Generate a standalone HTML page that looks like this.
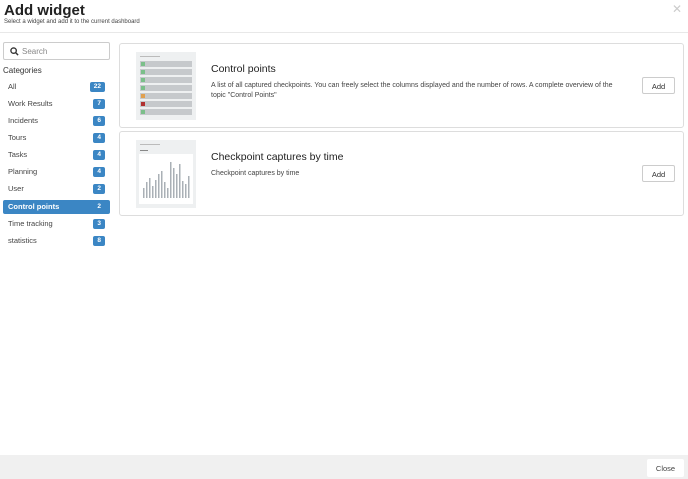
<!DOCTYPE html>
<html><head><style>
*{box-sizing:border-box;margin:0;padding:0}
body{width:688px;height:479px;background:#fff;font-family:"Liberation Sans",sans-serif;color:#333;position:relative;overflow:hidden}
.abs{position:absolute}
h1{position:absolute;left:4px;top:2px;font-size:15px;font-weight:bold;color:#222}
.sub{left:4px;top:19px;font-size:6px;color:#444}
.x{right:6px;top:2px;font-size:12px;color:#ccc}
.hr{left:0;right:0;top:32px;height:1px;background:#e8e8e8}
.search{left:3px;top:42px;width:107px;height:18px;border:1px solid #ccc;border-radius:2px;font-size:8px;color:#888;padding:4px 0 0 18px}
.cat{left:3px;top:66px;font-size:8px;color:#333}
.row{left:3px;width:107px;height:14px;line-height:14px;font-size:7.5px;color:#444;padding:0 0 0 5px;border-radius:2px}
.row b{position:absolute;right:5px;top:2px;height:10px;line-height:10px;background:#3b86c4;color:#fff;font-size:6.5px;border-radius:2px;padding:0 4px;font-weight:bold}
.row.on{background:#3b86c4;color:#fff;font-weight:bold}
.row.on b{background:none}
.card{left:119px;width:565px;height:85px;border:1px solid #ddd;border-radius:3px}
.thumb{position:absolute;left:16px;top:8px;width:60px;height:68px;background:#eef0f1}
.t{position:absolute;left:91px;font-size:10.5px;color:#222}
.d{position:absolute;left:91px;font-size:7px;color:#444;line-height:10px;width:410px}
.btn{position:absolute;right:8px;width:33px;height:17px;border:1px solid #ccc;border-radius:2px;font-size:7.5px;text-align:center;padding-top:4px;color:#333}
.foot{left:0;right:0;top:455px;height:24px;background:#f0f0f0}
.close{right:4px;top:459px;width:37px;height:18px;background:#fff;border-radius:2px;font-size:7.5px;text-align:center;padding-top:5px;color:#444}
</style></head><body>
<h1>Add widget</h1>
<div class="abs sub">Select a widget and add it to the current dashboard</div>
<div class="abs x">✕</div>
<div class="abs hr"></div>
<div class="abs search"><svg class="abs" style="left:6px;top:4px" width="9" height="9" viewBox="0 0 10 10"><circle cx="4" cy="4" r="3" fill="none" stroke="#333" stroke-width="1.5"/><path d="M6.3 6.3L9 9" stroke="#333" stroke-width="1.6"/></svg>Search</div>
<div class="abs cat">Categories</div>
<div class="abs row" style="top:80px">All<b>22</b></div>
<div class="abs row" style="top:97px">Work Results<b>7</b></div>
<div class="abs row" style="top:114px">Incidents<b>6</b></div>
<div class="abs row" style="top:131px">Tours<b>4</b></div>
<div class="abs row" style="top:148px">Tasks<b>4</b></div>
<div class="abs row" style="top:165px">Planning<b>4</b></div>
<div class="abs row" style="top:182px">User<b>2</b></div>
<div class="abs row on" style="top:200px">Control points<b>2</b></div>
<div class="abs row" style="top:217px">Time tracking<b>3</b></div>
<div class="abs row" style="top:234px">statistics<b>8</b></div>

<div class="abs card" style="top:43px">
<div class="thumb">
<div style="position:absolute;left:4px;top:4px;width:20px;height:1px;background:#bbb"></div>
<div style="position:absolute;left:4px;top:9px;width:52px;height:6px;background:#c6c9cc"><i style="position:absolute;left:1px;top:1px;width:4px;height:4px;background:#7bbf8a"></i></div>
<div style="position:absolute;left:4px;top:17px;width:52px;height:6px;background:#c6c9cc"><i style="position:absolute;left:1px;top:1px;width:4px;height:4px;background:#7bbf8a"></i></div>
<div style="position:absolute;left:4px;top:25px;width:52px;height:6px;background:#c6c9cc"><i style="position:absolute;left:1px;top:1px;width:4px;height:4px;background:#7bbf8a"></i></div>
<div style="position:absolute;left:4px;top:33px;width:52px;height:6px;background:#c6c9cc"><i style="position:absolute;left:1px;top:1px;width:4px;height:4px;background:#7bbf8a"></i></div>
<div style="position:absolute;left:4px;top:41px;width:52px;height:6px;background:#c6c9cc"><i style="position:absolute;left:1px;top:1px;width:4px;height:4px;background:#e0a050"></i></div>
<div style="position:absolute;left:4px;top:49px;width:52px;height:6px;background:#c6c9cc"><i style="position:absolute;left:1px;top:1px;width:4px;height:4px;background:#b03030"></i></div>
<div style="position:absolute;left:4px;top:57px;width:52px;height:6px;background:#c6c9cc"><i style="position:absolute;left:1px;top:1px;width:4px;height:4px;background:#7bbf8a"></i></div>
</div>
<div class="t" style="top:19px">Control points</div>
<div class="d" style="top:37px">A list of all captured checkpoints. You can freely select the columns displayed and the number of rows. A complete overview of the topic "Control Points"</div>
<div class="btn" style="top:33px">Add</div>
</div>

<div class="abs card" style="top:131px">
<div class="thumb">
<div style="position:absolute;left:4px;top:4px;width:20px;height:1px;background:#bbb"></div>
<div style="position:absolute;left:4px;top:10px;width:8px;height:1px;background:#888"></div>
<svg style="position:absolute;left:3px;top:14px" width="54" height="50"><rect width="54" height="50" fill="#fff"/>
<g fill="#aab0b6">
<rect x="4" y="34" width="1.5" height="10"/><rect x="7" y="28" width="1.5" height="16"/><rect x="10" y="24" width="1.5" height="20"/><rect x="13" y="32" width="1.5" height="12"/><rect x="16" y="26" width="1.5" height="18"/><rect x="19" y="20" width="1.5" height="24"/><rect x="22" y="17" width="1.5" height="27"/><rect x="25" y="28" width="1.5" height="16"/><rect x="28" y="34" width="1.5" height="10"/><rect x="31" y="8" width="1.5" height="36"/><rect x="34" y="14" width="1.5" height="30"/><rect x="37" y="20" width="1.5" height="24"/><rect x="40" y="10" width="1.5" height="34"/><rect x="43" y="27" width="1.5" height="17"/><rect x="46" y="30" width="1.5" height="14"/><rect x="49" y="22" width="1.5" height="22"/>
</g></svg>
</div>
<div class="t" style="top:19px">Checkpoint captures by time</div>
<div class="d" style="top:37px">Checkpoint captures by time</div>
<div class="btn" style="top:33px">Add</div>
</div>

<div class="abs foot"></div>
<div class="abs close">Close</div>
</body></html>
